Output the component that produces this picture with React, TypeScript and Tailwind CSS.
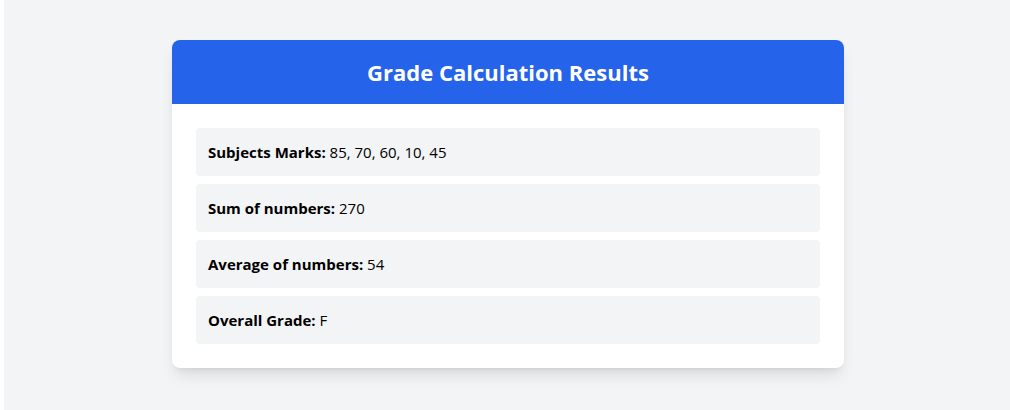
export default function App() {
  const rows = [
    { label: "Subjects Marks:", value: "85, 70, 60, 10, 45" },
    { label: "Sum of numbers:", value: "270" },
    { label: "Average of numbers:", value: "54" },
    { label: "Overall Grade:", value: "F" },
  ];

  return (
    <div
      className="flex min-h-screen bg-white pl-[4px] text-black"
      style={{ fontFamily: '"Open Sans", "Noto Sans", sans-serif' }}
    >
      <div className="flex-1 bg-gray-100 py-10 pl-[2px]">
        <div className="mx-auto w-[672px] overflow-hidden rounded-lg bg-white shadow-lg">
          <div className="bg-[#2563eb] py-4 text-center">
            <h1 className="text-[22px] leading-8 font-bold text-white">Grade Calculation Results</h1>
          </div>
          <div className="space-y-2 p-6">
            {rows.map((r) => (
              <div key={r.label} className="rounded bg-gray-100 p-3 text-[15px] leading-6">
                <span className="font-bold">{r.label}</span> {r.value}
              </div>
            ))}
          </div>
        </div>
      </div>
    </div>
  );
}
